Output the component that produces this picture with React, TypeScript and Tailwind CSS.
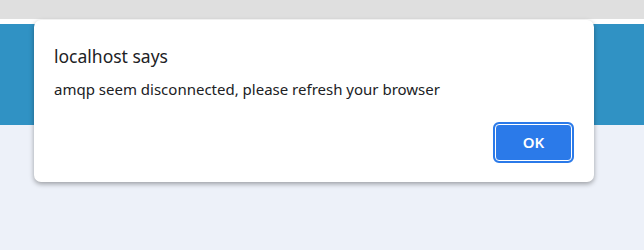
import React from "react";

export default function App() {
  return (
    <div className="relative w-[644px] h-[250px] overflow-hidden bg-[#edf1f9]" style={{ fontFamily: '"Noto Sans", "Open Sans", sans-serif' }}>
      <div className="h-[19px] bg-[#dfdfdf]" />
      <div className="h-[5px] bg-white" />
      <div className="h-[101px] bg-[#3092c4]" />
      <div className="absolute left-[34px] top-[20px] w-[560px] h-[162px] bg-white rounded-[7px] shadow-[0_2px_5px_rgba(0,0,0,0.35)] flex flex-col pl-[20px] pr-[20px] pt-[23px]">
        <div className="text-[17.5px] leading-[26px] text-[#202124]">localhost says</div>
        <div className="mt-[10px] text-[15px] leading-[20px] text-[#202124]">amqp seem disconnected, please refresh your browser</div>
        <div className="mt-auto mb-[19px] flex justify-end">
          <button className="w-[81px] h-[41px] rounded-[6px] bg-[#2b7ae9] border-2 border-[#2b7ae9] text-white text-[15px] font-semibold flex items-center justify-center p-0">
            <span className="w-full h-full rounded-[4px] border border-white flex items-center justify-center">OK</span>
          </button>
        </div>
      </div>
    </div>
  );
}
